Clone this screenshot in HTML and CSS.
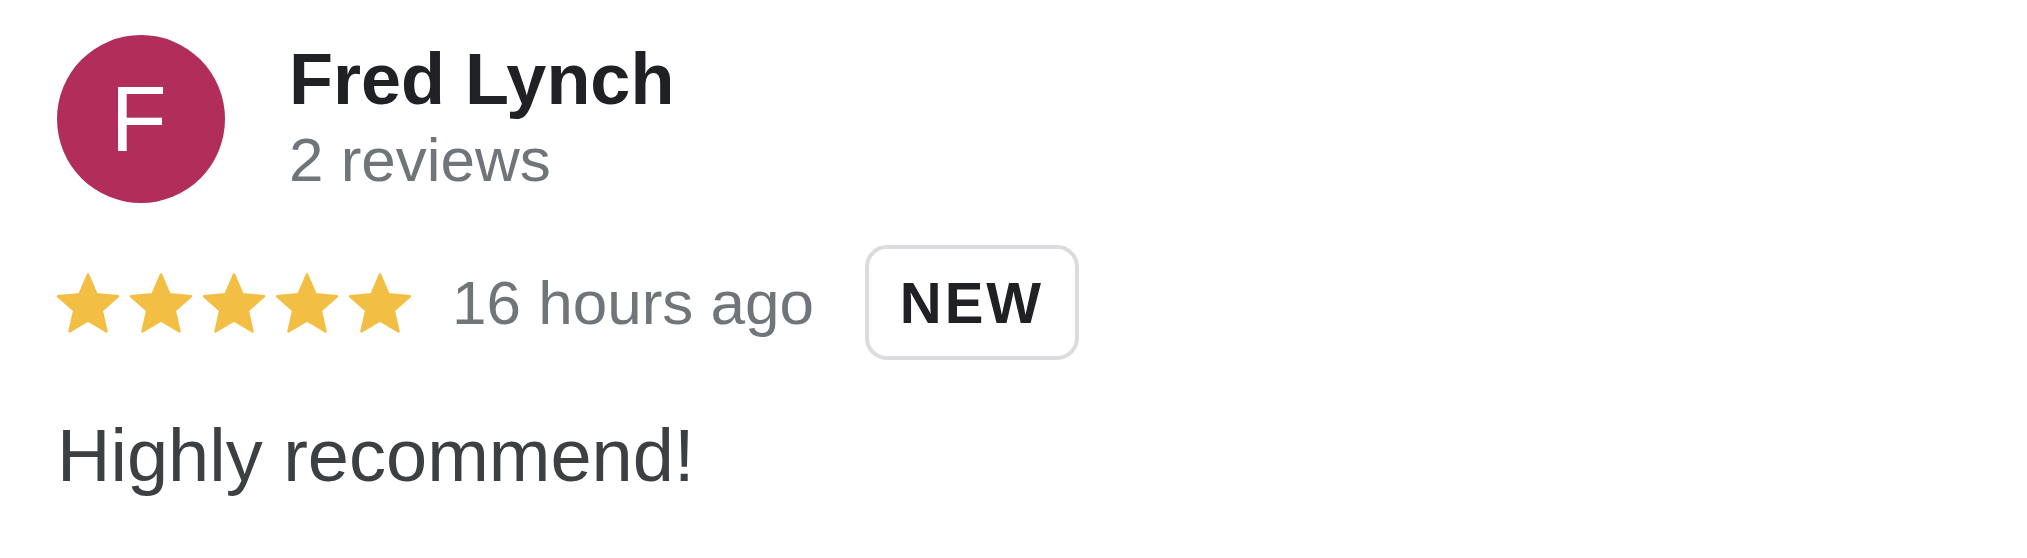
FILE: index.html
```html
<!DOCTYPE html>
<html lang="en">
<head>
<meta charset="utf-8">
<title>Review</title>
<link rel="stylesheet" href="styles.css">
</head>
<body>
<div class="review">
  <div class="header">
    <div class="avatar">F</div>
    <div class="who">
      <div class="name">Fred Lynch</div>
      <div class="count">2 reviews</div>
    </div>
  </div>
  <div class="meta">
    <div class="stars">
      <svg class="star" viewBox="0 0 62 60"><polygon points="31,1.5 39.52,21.27 60.96,23.27 44.79,37.48 49.52,58.48 31,47.5 12.48,58.48 17.21,37.48 1.04,23.27 22.48,21.27"/></svg>
      <svg class="star" viewBox="0 0 62 60"><polygon points="31,1.5 39.52,21.27 60.96,23.27 44.79,37.48 49.52,58.48 31,47.5 12.48,58.48 17.21,37.48 1.04,23.27 22.48,21.27"/></svg>
      <svg class="star" viewBox="0 0 62 60"><polygon points="31,1.5 39.52,21.27 60.96,23.27 44.79,37.48 49.52,58.48 31,47.5 12.48,58.48 17.21,37.48 1.04,23.27 22.48,21.27"/></svg>
      <svg class="star" viewBox="0 0 62 60"><polygon points="31,1.5 39.52,21.27 60.96,23.27 44.79,37.48 49.52,58.48 31,47.5 12.48,58.48 17.21,37.48 1.04,23.27 22.48,21.27"/></svg>
      <svg class="star" viewBox="0 0 62 60"><polygon points="31,1.5 39.52,21.27 60.96,23.27 44.79,37.48 49.52,58.48 31,47.5 12.48,58.48 17.21,37.48 1.04,23.27 22.48,21.27"/></svg>
    </div>
    <div class="time">16 hours ago</div>
    <div class="badge">NEW</div>
  </div>
  <div class="text">Highly recommend!</div>
</div>
</body>
</html>
```
FILE: styles.css
```css
html, body {
  margin: 0;
  padding: 0;
  background: #ffffff;
}
body {
  font-family: "Liberation Sans", Arial, sans-serif;
}
.review {
  padding: 35px 0 0 57px;
}
.header {
  display: flex;
  align-items: flex-start;
}
.avatar {
  width: 168px;
  height: 168px;
  border-radius: 50%;
  background: #b02e59;
  color: #ffffff;
  font-size: 92px;
  line-height: 168px;
  text-align: center;
  padding-right: 5px;
  box-sizing: border-box;
  flex: none;
}
.who {
  margin-left: 64px;
  margin-top: 4px;
}
.name {
  font-size: 72px;
  font-weight: bold;
  line-height: 80px;
  color: #202124;
}
.count {
  margin-top: 6px;
  font-size: 62px;
  line-height: 70px;
  color: #70757a;
}
.meta {
  display: flex;
  align-items: center;
  margin-top: 42px;
  height: 115px;
}
.stars {
  display: flex;
  gap: 11px;
}
.star {
  width: 62px;
  height: 60px;
  display: block;
  overflow: visible;
}
.star polygon {
  fill: #f2bf44;
  stroke: #f2bf44;
  stroke-width: 2.5;
  stroke-linejoin: round;
}
.time {
  margin-left: 41px;
  font-size: 62px;
  line-height: 70px;
  color: #70757a;
}
.badge {
  margin-left: 51px;
  box-sizing: border-box;
  width: 214px;
  height: 115px;
  border: 4px solid #dadce0;
  border-radius: 22px;
  font-size: 58px;
  font-weight: bold;
  letter-spacing: 3px;
  line-height: 107px;
  text-align: center;
  color: #202124;
}
.text {
  margin-top: 53px;
  font-size: 74px;
  line-height: 85px;
  color: #3c4043;
}
```
